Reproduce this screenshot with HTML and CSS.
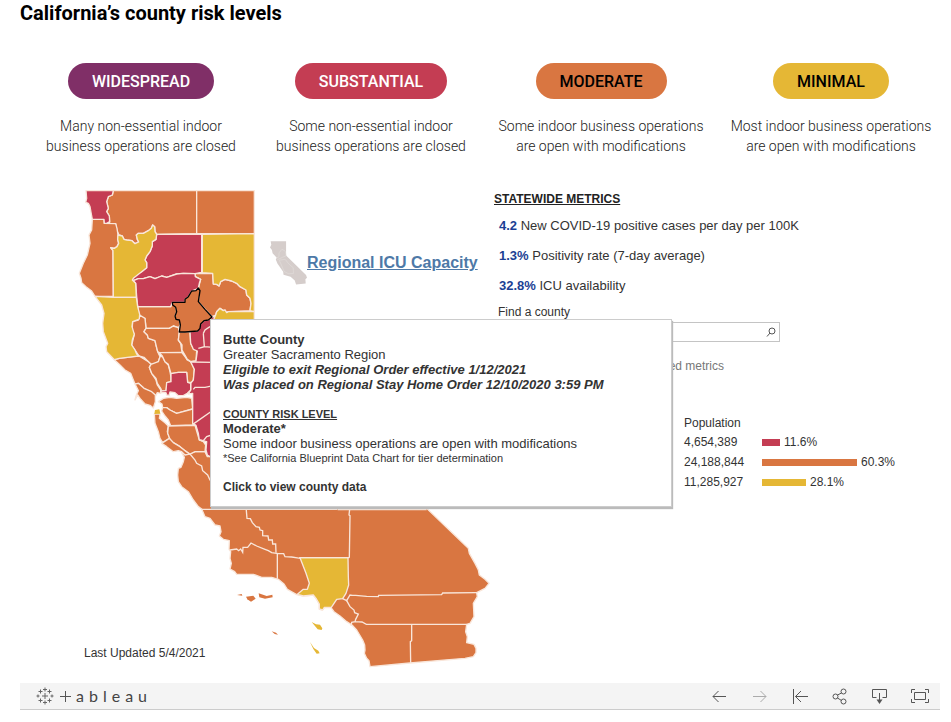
FILE: index.html
```html
<!DOCTYPE html>
<html lang="en">
<head>
<meta charset="utf-8">
<title>California’s county risk levels</title>
<link rel="stylesheet" href="styles.css">
</head>
<body>
<h1 class="title">California’s county risk levels</h1>

<section class="tiers">
  <div class="tier"><span class="pill widespread">WIDESPREAD</span><p>Many non-essential indoor<br>business operations are closed</p></div>
  <div class="tier"><span class="pill substantial">SUBSTANTIAL</span><p>Some non-essential indoor<br>business operations are closed</p></div>
  <div class="tier"><span class="pill moderate">MODERATE</span><p>Some indoor business operations<br>are open with modifications</p></div>
  <div class="tier"><span class="pill minimal">MINIMAL</span><p>Most indoor business operations<br>are open with modifications</p></div>
</section>

<main class="viz">
  <svg class="map" viewBox="0 0 1290 1500" role="img">
    <g class="o">
      <path d="M375,815 405,815 412,830 420,830 440,800 900,800 1070,985 1195,1105 1198,1120 1215,1150 1225,1170 1228,1185 1245,1198 1257,1210 1245,1225 1220,1238 1222,1250 1210,1270 1212,1310 1200,1330 1190,1333 1187,1355 1192,1370 1190,1388 1212,1393 1218,1405 1218,1418 1210,1430 1185,1435 1020,1449 900,1460 897,1442 890,1435 883,1420 885,1410 884,1395 878,1380 860,1350 846,1335 830,1325 810,1308 792,1295 783,1283 763,1282 758,1290 748,1287 748,1272 738,1255 730,1245 700,1248 680,1244 652,1228 642,1212 625,1198 605,1192 575,1192 550,1183 500,1183 494,1175 480,1167 484,1150 480,1135 482,1115 477,1108 478,1082 460,1078 448,1068 453,1055 450,1038 435,1035 420,1015 405,1010 395,987 385,980 370,960 355,935 335,920 325,905 323,885 325,865 333,862 340,845 343,832 335,818 360,822Z"/>
      <path d="M130,32 380,32 380,161 260,163 255,155 254,140 248,135 244,145 235,152 220,160 205,160 199,165 202,178 206,186 195,191 186,182 170,180 162,178 157,168 147,165 140,150 137,131 119,130 118,108 110,95 115,85 110,65 115,50 127,45Z"/>
      <path d="M380,32 553,32 553,161 380,161Z"/>
      <path d="M67,118 102,118 103,130 137,131 141,145 144,165 143,178 146,190 141,200 133,205 122,203 129,212 130,349 75,349 64,332 48,320 35,308 33,295 28,280 40,250 52,225 60,190 57,165 65,150Z"/>
      <path d="M376,281 428,280 430,312 440,313 447,318 452,305 465,298 485,303 500,310 510,320 528,330 530,345 540,355 543,370 540,392 475,395 470,398 465,390 460,392 450,385 440,395 437,405 426,410 385,365 388,345 385,325 392,298 376,290Z"/>
      <path d="M203,380 302,380 307,367 317,382 320,395 315,408 328,420 331,435 325,443 310,438 298,445 228,445 225,415 209,415Z"/>
      <path d="M209,405 225,415 228,445 222,455 232,465 235,475 255,482 258,495 263,515 270,530 265,545 255,552 243,553 235,545 222,532 207,528 195,510 185,495 193,463 186,450 188,425 205,420Z"/>
      <path d="M228,445 298,445 310,438 325,443 328,456 325,480 332,490 336,517 268,518 263,515 258,495 255,482 235,475 232,465 222,455Z"/>
      <path d="M133,539 148,535 190,530 207,528 235,545 243,553 238,562 245,580 258,600 262,615 272,630 272,640 262,638 257,648 245,637 222,625 205,610 195,612 190,600 182,580 165,570 150,555Z"/>
      <path d="M195,612 205,610 222,625 245,635 256,645 256,665 250,684 240,676 225,672 210,655 203,645 195,660 199,645 205,632Z"/>
      <path d="M243,553 265,545 270,530 278,530 285,545 295,555 300,575 303,592 303,605 290,608 290,620 288,632 275,633 272,625 262,610 258,595 245,580 238,562Z"/>
      <path d="M268,518 335,517 345,530 352,540 362,545 367,555 373,568 370,600 365,607 353,607 350,577 325,577 303,581 295,553 285,545 277,528Z"/>
      <path d="M328,456 360,455 362,490 370,505 380,512 378,543 362,545 352,538 343,522 336,510 336,495 325,480Z"/>
      <path d="M265,665 280,655 300,652 320,655 350,652 365,655 368,687 320,700 300,690 290,683 278,683 276,672Z"/>
      <path d="M278,683 290,683 300,690 320,700 368,687 369,735 302,737 295,720 285,708 275,693Z"/>
      <path d="M253,702 270,702 268,715 285,728 295,738 292,755 299,775 278,788 270,775 265,755 255,730Z"/>
      <path d="M295,738 375,736 382,760 388,780 400,785 407,795 405,815 375,815 360,822 345,812 330,800 310,788 300,778 293,760Z"/>
      <path d="M298,775 310,788 330,800 345,812 358,822 345,825 335,815 325,812 310,815 290,800 275,790Z"/>
    </g>
    <g class="r">
      <path d="M48,32 130,32 127,45 115,50 110,65 115,85 110,95 118,108 119,125 110,130 103,130 102,118 67,118 64,102 60,80 55,70 47,67 50,55Z"/>
      <path d="M260,163 395,162 395,277 375,281 340,280 320,282 290,292 275,288 255,296 240,290 220,296 205,296 190,302 187,298 190,290 205,280 215,275 230,263 230,248 225,240 230,228 240,215 247,197 247,185 258,178Z"/>
      <path d="M190,302 205,296 220,296 240,290 255,296 275,288 290,292 320,282 340,280 375,281 376,290 392,298 388,310 385,325 365,333 355,350 345,358 345,367 307,367 302,380 203,380 200,350 197,310Z"/>
      <path d="M383,453 392,432 402,422 415,420 428,410 500,412 500,850 420,830 412,825 408,810 410,785 388,780 385,760 378,736 368,730 368,640 355,642 362,630 362,610 370,600 373,568 362,545 378,543 382,513 370,508 362,490 360,455Z"/>
      <path d="M303,581 325,577 350,577 353,607 362,610 362,630 352,640 340,647 325,647 315,638 300,636 297,647 290,645 288,638 275,638 272,633 288,632 290,608 303,605Z"/>
    </g>
    <g class="y">
      <path d="M144,165 157,168 162,178 170,180 186,182 195,191 206,186 202,178 199,165 205,160 220,160 235,152 244,145 248,135 254,140 255,155 260,163 258,178 247,185 247,197 240,215 230,228 225,240 230,248 230,263 215,275 190,295 187,300 197,310 199,352 130,352 129,212 122,203 133,205 141,200 146,190 143,178Z"/>
      <path d="M397,163 553,161 553,395 540,392 543,370 540,355 530,345 528,330 510,320 500,310 485,303 465,298 452,305 447,318 440,313 430,312 428,280 397,278Z"/>
      <path d="M437,405 440,395 450,385 460,392 465,390 470,398 475,395 553,395 553,430 426,430Z"/>
      <path d="M75,349 130,352 199,352 203,380 209,403 208,417 188,425 186,440 193,463 187,480 185,495 195,510 200,522 207,528 190,530 148,535 133,539 110,515 108,500 113,490 100,455 98,430 102,400 95,375Z"/>
      <path d="M690,1133 834,1133 835,1190 836,1215 828,1240 818,1256 800,1258 792,1270 784,1282 763,1282 758,1290 748,1287 748,1272 738,1255 730,1245 700,1248 682,1243 700,1228 712,1228 718,1210 708,1180Z"/>
    </g>
    <g class="y island">
      <path d="M255,690 268,688 271,701 253,702Z"/>
      <path d="M725,1326 738,1333 750,1334 757,1345 755,1350 743,1348Z"/>
      <path d="M720,1386 732,1404 745,1412 749,1420 740,1421 730,1407Z"/>
    </g>
    <g class="o island">
      <path d="M501,1245 515,1242 517,1247Z"/>
      <path d="M528,1250 550,1247 557,1256 543,1265 532,1258Z"/>
      <path d="M566,1240 590,1248 607,1244 608,1252 585,1256 568,1252Z"/>
      <path d="M605,1354 618,1358 624,1364 614,1362Z"/>
    </g>
    <g class="line">
      <path d="M395,988H802M803,989H1070"/>
      <path d="M528,980 531,1015 541,1016 547,1028 558,1040 568,1042 570,1050 578,1052 578,1067 594,1068 596,1080 607,1080 608,1092 617,1092 618,1118"/>
      <path d="M480,1110 500,1107 506,1112 512,1107 518,1117 519,1102 533,1102 543,1089 560,1098 585,1108 595,1112 605,1118 625,1121 641,1121 645,1130 665,1131 690,1135 690,1133H838"/>
      <path d="M622,1121V1196M839,988 837,1005 840,1007 838,1133"/>
      <path d="M818,1256 830,1262 840,1245 848,1246 857,1246 890,1249 925,1250 926,1246 1115,1244 1118,1239 1222,1238"/>
      <path d="M830,1262 840,1280 852,1290 854,1298 865,1302 857,1318 855,1325 845,1327 843,1338M855,1325 876,1326 889,1333H1190"/>
      <path d="M1025,1333V1382L1021,1385 1022,1449"/>
      <path d="M360,822 375,840 380,850 395,858 398,872 413,885 420,900 440,915"/>
      <path d="M400,460 405,450 420,440M400,460 403,500 385,505M403,500 430,502M362,546 430,547M370,628 375,622 405,622 430,617M368,733 380,725 430,690M555,970 590,988"/>
      <path d="M388,780 400,782 410,770 425,765"/>
    </g>
    <path class="selected" d="M307,367 345,367 345,358 355,350 365,333 378,332 385,324 390,332 385,365 405,388 426,411 415,420 402,422 392,432 390,445 383,453 345,456 328,456 331,435 328,420 318,418 315,408 320,395 317,382 308,375Z"/>
  </svg>

  <a class="icu" href="#icu">
    <svg viewBox="0 0 115 135" aria-hidden="true">
      <path class="mini" d="M2,0H50V44L112,105 115,113 110,118 111,131 81,134 77,122 64,110 42,104 41,95 23,69 18,57 21,51 8,37 6,27 0,19 4,11Z"/>
      <path class="mini-line" d="M20,52 28,48 28,36 37,25 47,30 50,45 39,50 23,57M29,59 47,56 59,71 72,82 73,100 58,101 44,94Z"/>
    </svg>
    <span>Regional ICU Capacity</span>
  </a>

  <p class="updated">Last Updated 5/4/2021</p>

  <section class="panel">
    <h2>STATEWIDE METRICS</h2>
    <ul class="metrics">
      <li><b>4.2</b> New COVID-19 positive cases per day per 100K</li>
      <li><b>1.3%</b> Positivity rate (7-day average)</li>
      <li><b>32.8%</b> ICU availability</li>
    </ul>
    <form class="find">
      <label for="county">Find a county</label>
      <div class="box">
        <input id="county" type="text">
        <svg viewBox="0 0 10 10" aria-hidden="true"><circle cx="6" cy="4" r="3"/><path d="M4 6 1 9.500"/></svg>
      </div>
    </form>
    <p class="note">ed metrics</p>
    <table class="population">
      <thead><tr><th scope="col">Population</th><th></th></tr></thead>
      <tbody>
        <tr><td>4,654,389</td><td><div class="share"><i class="bar substantial" style="width:18px"></i>11.6%</div></td></tr>
        <tr><td>24,188,844</td><td><div class="share"><i class="bar moderate" style="width:95px"></i>60.3%</div></td></tr>
        <tr><td>11,285,927</td><td><div class="share"><i class="bar minimal" style="width:44px"></i>28.1%</div></td></tr>
      </tbody>
    </table>
  </section>

  <div class="tooltip" role="tooltip">
    <p><b>Butte County</b></p>
    <p>Greater Sacramento Region</p>
    <p class="order">Eligible to exit Regional Order effective 1/12/2021</p>
    <p class="order">Was placed on Regional Stay Home Order 12/10/2020 3:59 PM</p>
    <p class="label">COUNTY RISK LEVEL</p>
    <p><b>Moderate*</b></p>
    <p>Some indoor business operations are open with modifications</p>
    <p class="small">*See California Blueprint Data Chart for tier determination</p>
    <p class="action">Click to view county data</p>
  </div>
</main>

<footer class="toolbar">
  <a class="brand" href="#tableau">
    <svg class="mark" viewBox="0 0 18 18" aria-hidden="true">
      <path d="M9 6v6M6 9h6M9 .5v4M7 2.500h4M9 13.500v4M7 15.500h4M4.500 2.500v4M2.500 4.500h4M13.500 2.500v4M11.500 4.500h4M4.500 11.500v4M2.500 13.500h4M13.500 11.500v4M11.500 13.500h4M2 7.500v3M.5 9h3M16 7.500v3M14.500 9h3"/>
    </svg>
    <span class="word"><svg class="plus" viewBox="0 0 11 11" aria-hidden="true"><path d="M5.500 0v11M0 5.500h11"/></svg><span>a</span><span>b</span><span>l</span><span>e</span><span>a</span><span>u</span></span>
  </a>
  <div class="tools">
    <button type="button" aria-label="Undo"><svg viewBox="0 0 20 20"><path d="M16 10.500H3M8.500 5 3 10.500 8.500 16"/></svg></button>
    <button type="button" aria-label="Redo" disabled><svg viewBox="0 0 20 20"><path d="M3 10.500h13M10.500 5 16 10.500 10.500 16"/></svg></button>
    <button type="button" aria-label="Revert"><svg viewBox="0 0 20 20"><path d="M3.500 3v15M18 10.500H5.500M11 5 5.500 10.500 11 16"/></svg></button>
    <button type="button" aria-label="Share"><svg viewBox="0 0 20 20"><circle cx="5.500" cy="10.500" r="2.500"/><circle cx="13.500" cy="5.500" r="2.500"/><circle cx="13.500" cy="15.500" r="2.500"/><path d="M7.500 9 11.500 7M7.500 12l4 2.500"/></svg></button>
    <button type="button" aria-label="Download"><svg viewBox="0 0 20 20"><path d="M6.500 11.500H2.500v-8h14v8H12.500M9.500 7v7"/><path class="solid" d="M6.500 13.500h6L9.500 18Z"/></svg></button>
    <button type="button" aria-label="Full screen"><svg viewBox="0 0 20 20"><path d="M4.500 6.500h11v7h-11zM1.500 7V3.500H5M15 3.500h3.500V7M18.500 13v3.500H15M5 16.500H1.500V13"/></svg></button>
  </div>
</footer>
</body>
</html>
```
FILE: styles.css
```css
* { box-sizing: border-box; }
body {
  margin: 0;
  background: #fff;
  color: #333;
  font: 13px/15px "Liberation Sans", Arial, sans-serif;
}
p, h1, h2, ul { margin: 0; padding: 0; }

.title {
  margin: 1px 20px 38px;
  color: #000;
  font: 700 20px/24px Roboto, sans-serif;
}

.tiers {
  display: grid;
  grid-template-columns: repeat(4, 1fr);
  margin: 0 5px 24px 26px;
  font-family: Roboto, sans-serif;
  text-align: center;
}
.tier p {
  margin-top: 17px;
  color: #222;
  font-weight: 300;
  font-size: 14px;
  line-height: 20px;
}
.pill {
  display: inline-block;
  padding: 1px 24px 0;
  border-radius: 18px;
  color: #fff;
  font-weight: 500;
  font-size: 16px;
  line-height: 35px;
  vertical-align: top;
}
.widespread { background: #802f67; }
.substantial { background: #c43d53; }
.moderate { background: #d97641; }
.minimal { background: #e5b735; }
.pill.moderate, .pill.minimal { color: #000; }

.viz {
  position: relative;
  display: grid;
  grid-template-columns: 200px 224px 1fr;
  margin-left: 70px;
}
.map {
  grid-area: 1 / 1 / 2 / 3;
  width: 430px;
  height: 500px;
}
.map .o, .map .r, .map .y { stroke: #f9e6da; stroke-width: 4; stroke-linejoin: round; }
.map .o { fill: #d97641; }
.map .r { fill: #c43d53; }
.map .y { fill: #e5b735; }
.map .island { stroke: none; }
.map .line { fill: none; stroke: #f9e6da; stroke-width: 4; }
.map .selected { fill: #d97641; stroke: #000; stroke-width: 4; stroke-linejoin: round; }

.icu {
  grid-area: 1 / 2;
  align-self: start;
  display: flex;
  align-items: center;
  margin-top: 60px;
  color: #4e79a7;
  font-weight: 700;
  font-size: 16px;
  line-height: 18px;
  white-space: nowrap;
}
.icu svg { flex: none; width: 37px; height: 46px; }
.mini { fill: #d5cdcb; }
.mini-line { fill: none; stroke: #e2dcda; stroke-width: 2; }

.updated {
  grid-area: 1 / 1;
  align-self: end;
  margin: 0 0 19px 14px;
  font-size: 12px;
}

.panel { grid-area: 1 / 3; }
.panel h2 {
  margin-top: 12px;
  color: #222;
  font-size: 12px;
  line-height: 14px;
  text-decoration: underline;
}
.metrics {
  margin: 5px 0 0 5px;
  list-style: none;
  line-height: 30px;
}
.metrics b { color: #1c3f94; }
.find { width: 282px; margin: 1px 0 0 4px; }
.find label { display: block; font-size: 12px; line-height: 20px; }
.box { position: relative; }
.box input {
  display: block;
  width: 100%;
  height: 20px;
  padding: 0 20px 0 4px;
  border: 1px solid #c4c4c4;
  background: #fff;
  font: inherit;
}
.box svg {
  position: absolute;
  top: 5px;
  right: 4px;
  width: 10px;
  height: 10px;
  fill: none;
  stroke: #555;
}
.note {
  width: 230px;
  margin-top: 14px;
  color: #777;
  font-size: 12px;
  line-height: 20px;
  text-align: right;
}
.population {
  margin: 38px 0 0 190px;
  border-collapse: collapse;
  font-size: 12px;
}
.population th { width: 78px; padding: 0; font-weight: 400; line-height: 18px; text-align: left; }
.population td { padding: 0; line-height: 20px; }
.share { display: flex; align-items: center; gap: 4px; }
.bar { height: 7px; }

.tooltip {
  position: absolute;
  top: 139px;
  left: 140px;
  width: 462px;
  padding: 12px;
  border: 1px solid #ccc;
  background: #fff;
  box-shadow: 1px 2px 1px #bbb;
}
.tooltip .order { font-weight: 700; font-style: italic; }
.tooltip .label { margin-top: 15px; font-size: 11px; font-weight: 700; text-decoration: underline; line-height: 14px; }
.tooltip .small { font-size: 11px; line-height: 14px; }
.tooltip .action { margin-top: 15px; font-size: 12px; font-weight: 700; line-height: 14px; }

.toolbar {
  display: flex;
  justify-content: space-between;
  align-items: center;
  height: 27px;
  margin: 3px 11px 0 20px;
  padding: 0 10px 0 16px;
  border-bottom: 1px solid #ccc;
  background: #f4f4f4;
}
.brand { display: flex; align-items: center; gap: 6px; color: #444; text-decoration: none; }
.mark { width: 18px; height: 18px; stroke: #666; fill: none; }
.word { display: flex; align-items: center; gap: 5px; font: 16px/20px Lato, sans-serif; }
.plus { width: 11px; height: 11px; stroke: #555; stroke-width: 1; }
.tools { display: flex; gap: 20px; }
.tools button { display: flex; padding: 0; border: 0; background: none; }
.tools svg { width: 20px; height: 20px; fill: none; stroke: #555; }
.tools button:disabled { opacity: .45; }
.tools .solid { fill: #555; stroke: none; }
```
